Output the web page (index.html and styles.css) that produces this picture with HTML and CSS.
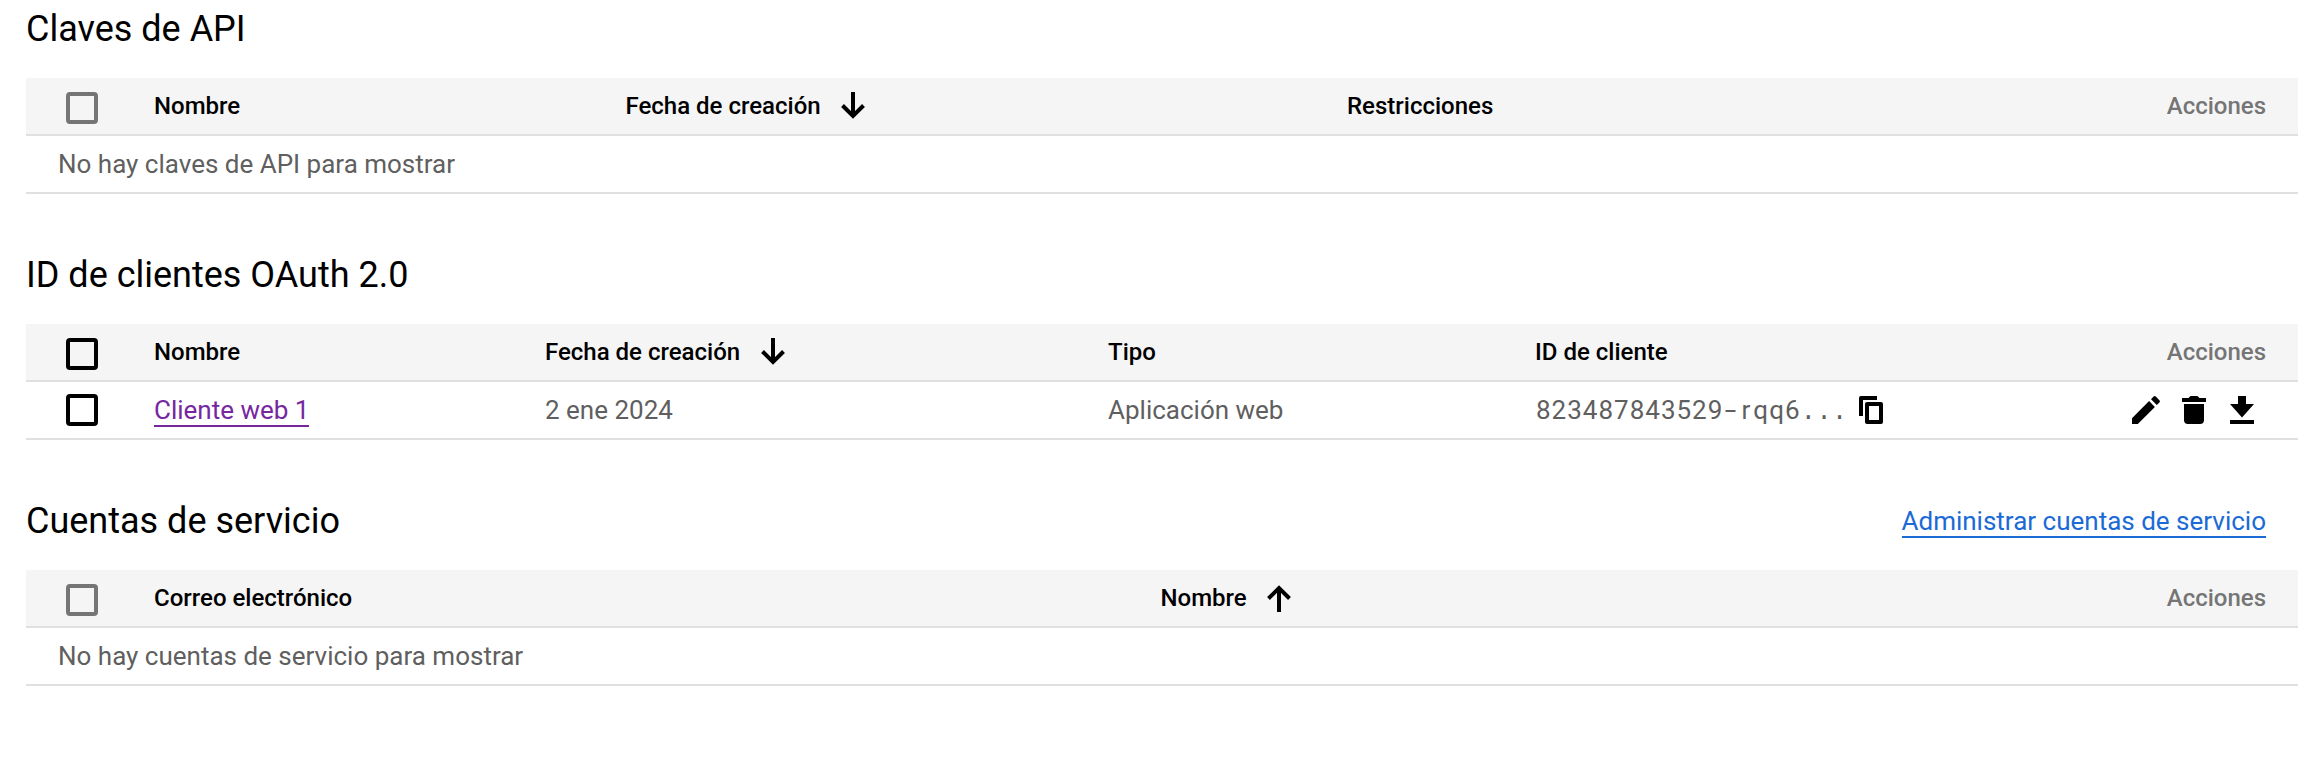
FILE: index.html
```html
<!DOCTYPE html>
<html lang="es">
<head>
<meta charset="utf-8">
<title>Credenciales</title>
<link rel="stylesheet" href="styles.css">
</head>
<body>
<main class="page">
  <section class="section">
    <header class="section-head"><h2 class="title">Claves de API</h2></header>
    <div class="row row-head cols-api">
      <span class="check check-off"></span>
      <span class="cell">Nombre</span>
      <span class="cell">Fecha de creación<svg class="arrow arrow-down" viewBox="0 0 24 27"><path d="M12 0V24M1.5 13.5L12 24L22.5 13.5"/></svg></span>
      <span class="cell">Restricciones</span>
      <span class="cell actions-label">Acciones</span>
    </div>
    <div class="row empty">No hay claves de API para mostrar</div>
  </section>

  <section class="section">
    <header class="section-head"><h2 class="title">ID de clientes OAuth 2.0</h2></header>
    <div class="row row-head cols-oauth">
      <span class="check"></span>
      <span class="cell">Nombre</span>
      <span class="cell">Fecha de creación<svg class="arrow arrow-down" viewBox="0 0 24 27"><path d="M12 0V24M1.5 13.5L12 24L22.5 13.5"/></svg></span>
      <span class="cell">Tipo</span>
      <span class="cell">ID de cliente</span>
      <span class="cell actions-label">Acciones</span>
    </div>
    <div class="row cols-oauth">
      <span class="check"></span>
      <span class="cell"><a class="link visited">Cliente web 1</a></span>
      <span class="cell">2 ene 2024</span>
      <span class="cell">Aplicación web</span>
      <span class="cell"><span class="client-id">823487843529<span class="dash">-</span><span class="ch-r">r</span>qq6<span class="mono">...</span></span><svg class="copy" viewBox="0 0 24 28"><path d="M0 20V2Q0 0 2 0H18V4H4V20Z"/><path fill-rule="evenodd" d="M8 6H22Q24 6 24 8V26Q24 28 22 28H8Q6 28 6 26V8Q6 6 8 6ZM10 10V24H20V10Z"/></svg></span>
      <span class="cell actions">
        <svg class="pencil" viewBox="0 0 28 28"><path d="M0 22.2L17.1 5.1L22.9 10.9L5.8 28H0ZM19 3.2L21.6.6Q22.7-.4 23.8.6L27.4 4.2Q28.4 5.3 27.4 6.4L24.8 9Z"/></svg>
        <svg class="trash" viewBox="0 0 24 28"><path d="M0 2H6.5L8.5 0H15.5L17.5 2H24V6H0ZM2 8H22V24Q22 28 18 28H6Q2 28 2 24Z"/></svg>
        <svg class="download" viewBox="0 0 24 28"><path d="M8 0H16V8H24L12 21.5L0 8H8ZM0 24H24V28H0Z"/></svg>
      </span>
    </div>
  </section>

  <section class="section">
    <header class="section-head"><h2 class="title">Cuentas de servicio</h2><a class="link">Administrar cuentas de servicio</a></header>
    <div class="row row-head cols-service">
      <span class="check check-off"></span>
      <span class="cell">Correo electrónico</span>
      <span class="cell">Nombre<svg class="arrow" viewBox="0 0 24 27"><path d="M12 27V3M1.5 13.5L12 3L22.5 13.5"/></svg></span>
      <span class="cell actions-label">Acciones</span>
    </div>
    <div class="row empty">No hay cuentas de servicio para mostrar</div>
  </section>
</main>
</body>
</html>
```
FILE: styles.css
```css
* { box-sizing: border-box; }
body {
  margin: 0;
  background: #fff;
  color: #5f5f5f;
  font: 400 26px/32px Roboto, sans-serif;
}
.page { padding: 0 16px 0 26px; }
.section { height: 246px; }
.section-head {
  display: flex;
  align-items: flex-start;
  justify-content: space-between;
  height: 78px;
  padding-right: 32px;
}
.title {
  margin: 0;
  padding-top: 7px;
  font-size: 36px;
  font-weight: 400;
  line-height: 44px;
  color: #000;
}
.row {
  display: grid;
  align-items: center;
  height: 58px;
  border-bottom: 2px solid #e0e0e0;
}
.row-head {
  background: #f5f5f5;
  color: #000;
  font-size: 24px;
  font-weight: 500;
}
.cols-api { grid-template-columns: 128px 471.5px 721.5px 1fr 300px; }
.cols-oauth { grid-template-columns: 128px 391px 563px 427px 1fr 300px; }
.cols-service { grid-template-columns: 128px 1006.5px 1fr 300px; }
.cell { display: flex; align-items: center; white-space: nowrap; }
.check {
  width: 32px;
  height: 32px;
  margin-left: 40px;
  border: 4px solid #000;
  border-radius: 4px;
}
.row-head .check { margin-top: 4px; }
.check-off { border-color: #757575; }
.arrow {
  width: 24px;
  height: 27px;
  margin-left: 20px;
  fill: none;
  stroke: #000;
  stroke-width: 4;
}
.arrow-down { margin: -1px 0 0 21px; }
.cols-api .arrow-down { margin-left: 20px; }
.actions-label { justify-content: flex-end; padding-right: 32px; color: #757575; }
.empty { padding-left: 32px; }
.link {
  height: 34px;
  border-bottom: 2px solid #1b6ad6;
  color: #1b6ad6;
  line-height: 35px;
}
.section-head .link { margin-top: 12px; }
.visited { border-color: #7627a0; color: #7627a0; margin-top: -1px; }
.client-id { padding-left: 1px; letter-spacing: 1px; }
.mono { font-family: "Liberation Mono", monospace; letter-spacing: 0; line-height: 0; }
.dash { display: inline-block; margin: 0 4px; letter-spacing: 0; transform: scaleX(1.6); }
.ch-r { padding: 0 2px 0 3px; }
.copy { width: 24px; height: 28px; margin-left: 12px; fill: #000; }
.actions { justify-content: flex-end; padding-right: 44px; fill: #000; }
.pencil { width: 28px; height: 28px; }
.trash { width: 24px; height: 28px; margin-left: 22px; }
.download { width: 24px; height: 28px; margin-left: 24px; }
```
